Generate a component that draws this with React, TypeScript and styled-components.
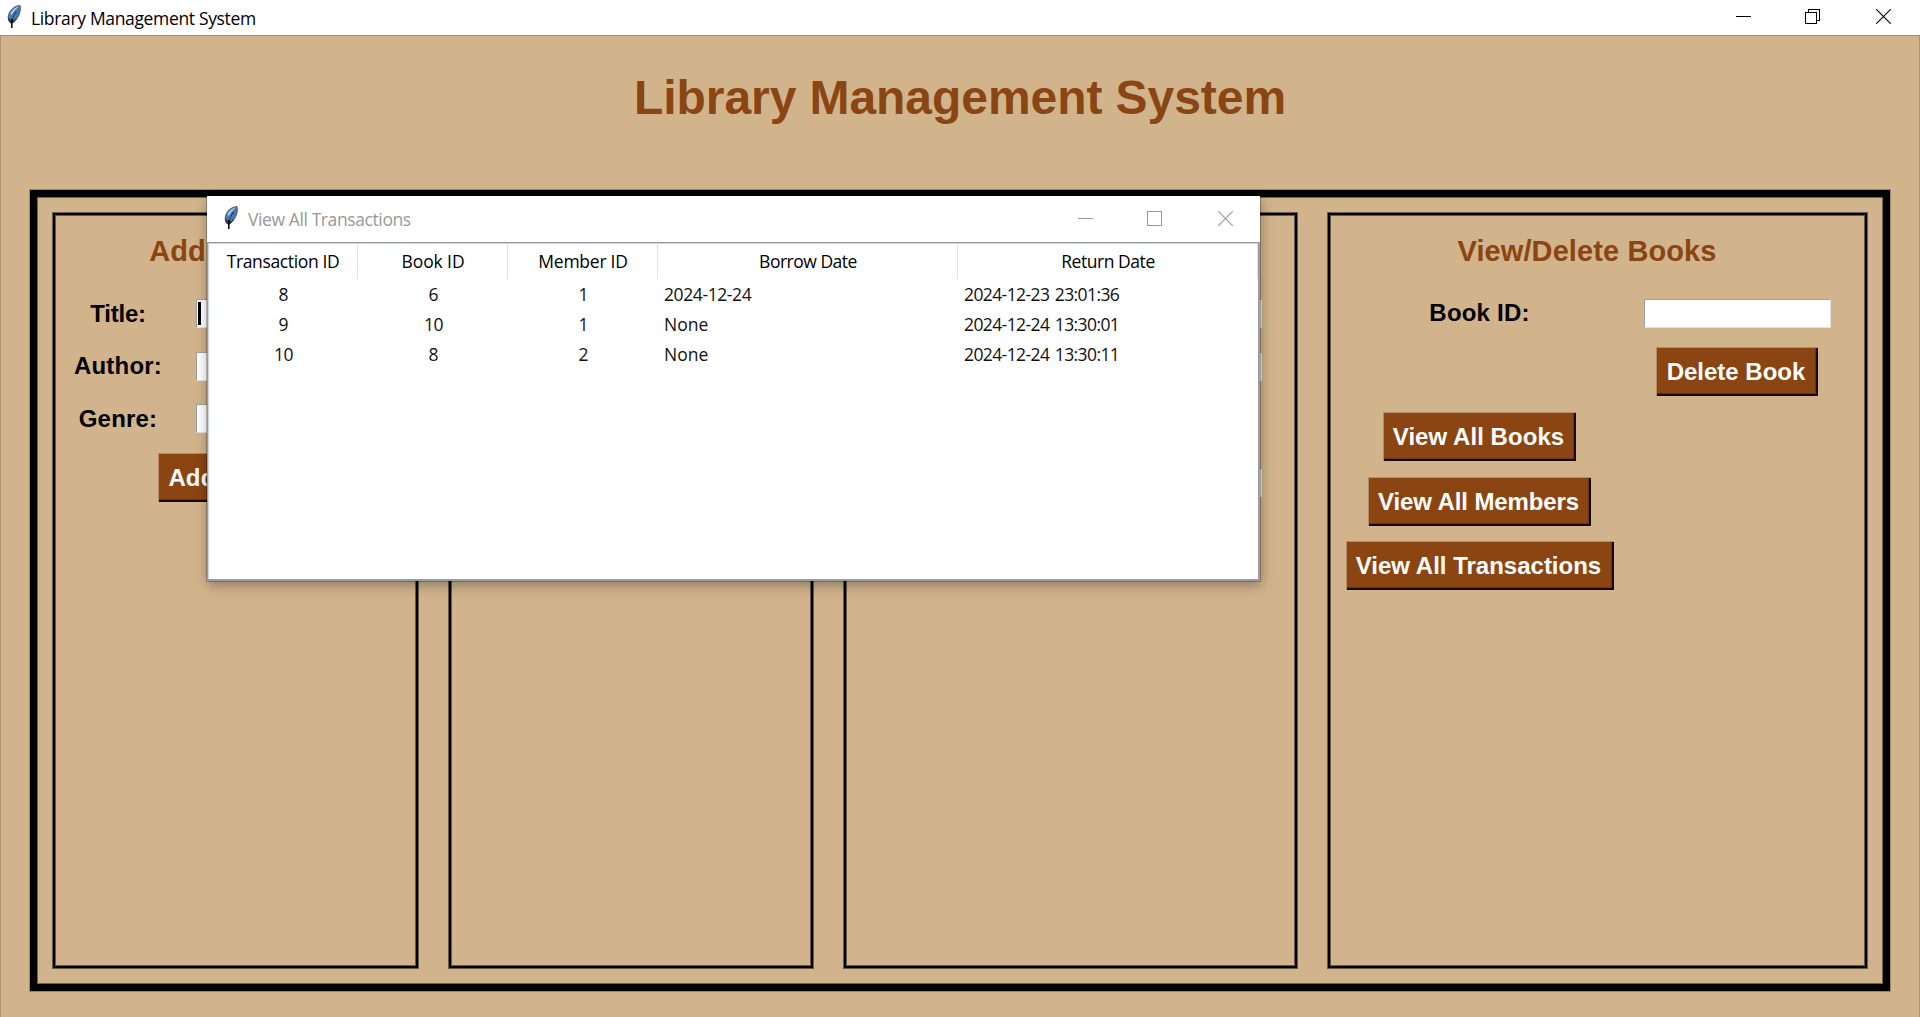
import React from 'react';
import styled, { createGlobalStyle, css } from 'styled-components';

const colors = {
  tan: '#d2b48c',
  brown: '#8b4513',
  edge: '#a99172',
  treeEdge: '#969da6',
};

const GlobalStyle = createGlobalStyle`
  *, *::before, *::after { box-sizing: border-box; }
  html, body { margin: 0; padding: 0; overflow: hidden; }
  body { font-family: "Liberation Sans", Arial, sans-serif; color: #000; }
`;

const Desktop = styled.div`
  position: relative;
  display: flex;
  flex-direction: column;
  width: 1920px;
  height: 1017px;
  background: ${colors.tan};
  overflow: hidden;
`;

const MainTitleBar = styled.header`
  display: flex;
  flex: none;
  height: 35px;
  padding-left: 7px;
  background: #fff;
`;

const WindowTitle = styled.span<{ $muted?: boolean; $track: number }>`
  font-family: "Open Sans", "Noto Sans", sans-serif;
  font-size: 17.5px;
  line-height: 24px;
  letter-spacing: ${(p) => p.$track}px;
  color: ${(p) => (p.$muted ? '#999' : '#000')};
  white-space: nowrap;
`;

const MainTitle = styled(WindowTitle)`
  margin: 6px 0 0 9px;
`;

const Controls = styled.div<{ $muted?: boolean; $gaps: string; $top: number }>`
  display: grid;
  grid-template-columns: ${(p) => p.$gaps};
  margin-left: auto;
  padding-top: ${(p) => p.$top}px;
  color: ${(p) => (p.$muted ? '#999' : '#000')};

  svg { display: block; }
`;

const Feather = styled.svg<{ $top: number }>`
  display: block;
  flex: none;
  width: 15px;
  height: 24px;
  margin-top: ${(p) => p.$top}px;
`;

const MainBody = styled.main`
  display: flex;
  flex: 1;
  flex-direction: column;
  padding: 0 29px 26px;
  border: 1px solid ${colors.edge};
  border-bottom: 0;
`;

const PageTitle = styled.h1`
  flex: none;
  height: 154px;
  margin: 0;
  padding-top: 34px;
  font-size: 48px;
  line-height: 56px;
  letter-spacing: -0.06px;
  text-align: center;
  color: ${colors.brown};
`;

const Frame = styled.section`
  display: grid;
  flex: 1;
  grid-template-columns: 365px 364px 453px 539px;
  column-gap: 31px;
  padding: 16px;
  border: 7px solid #000;
  box-shadow: 0 0 0 1px rgba(0, 0, 0, 0.25), inset 0 0 0 1px rgba(0, 0, 0, 0.45);
`;

const Panel = styled.section<{ $columns: string; $rows: string; $padX: number }>`
  display: grid;
  grid-template-columns: ${(p) => p.$columns};
  grid-template-rows: ${(p) => p.$rows};
  align-items: center;
  justify-items: center;
  align-content: start;
  padding: 8px ${(p) => p.$padX}px 0;
  border: 2px solid #000;
  box-shadow: 0 0 0 1px rgba(0, 0, 0, 0.5), inset 0 0 0 1px rgba(0, 0, 0, 0.5);
`;

const PanelTitle = styled.h2<{ $shift?: number }>`
  grid-column: 1 / -1;
  margin: 0;
  padding: 0 ${(p) => p.$shift ?? 0}px 8px 0;
  font-size: 29px;
  line-height: 34px;
  letter-spacing: 0.1px;
  color: ${colors.brown};
  white-space: nowrap;
`;

const Label = styled.label<{ $track?: number }>`
  font-size: 24px;
  font-weight: bold;
  line-height: 28px;
  letter-spacing: ${(p) => p.$track ?? 0.2}px;
  white-space: nowrap;
`;

const EmptyRow = styled.div`
  grid-column: 1 / -1;
`;

const Entry = styled.div<{ $end?: boolean }>`
  display: flex;
  grid-column: 2;
  justify-self: ${(p) => (p.$end ? 'end' : 'center')};
  width: 187px;
  height: 29px;
  padding: 2px 1px;
  background: #fff;
  border: 1px solid #e3e3e3;
  border-top-color: #a0a0a0;
  border-left-color: #a0a0a0;
`;

const Caret = styled.span`
  width: 3px;
  height: 23px;
  background: #000;
`;

const TkButton = styled.button<{ $width: number; $column?: string; $track?: number }>`
  grid-column: ${(p) => p.$column ?? '1'};
  width: ${(p) => p.$width}px;
  height: 49px;
  padding: 0 2px 0 0;
  border: 0;
  border-radius: 0;
  background: ${colors.brown};
  box-shadow: inset 1px 1px 0 #b98a68, inset -2px -2px 0 #140a03, inset -3px -3px 0 #6a340e;
  font-family: inherit;
  font-size: 24px;
  font-weight: bold;
  line-height: 49px;
  letter-spacing: ${(p) => p.$track ?? 0}px;
  color: #fff;
  white-space: nowrap;
`;

const Dialog = styled.section`
  position: absolute;
  top: 196px;
  left: 207px;
  display: flex;
  flex-direction: column;
  width: 1053px;
  height: 385px;
  background: #fff;
  box-shadow: 0 0 0 1px rgba(0, 0, 0, 0.22), 1px 4px 12px rgba(0, 0, 0, 0.34);
`;

const DialogTitleBar = styled.header`
  display: flex;
  flex: none;
  height: 46px;
  padding-left: 17px;
`;

const DialogTitle = styled(WindowTitle)`
  margin: 11px 0 0 9px;
`;

const Tree = styled.div`
  flex: 1;
  border: 1px solid ${colors.treeEdge};
  border-width: 1px 2px 2px 1px;
  box-shadow: inset 1px 1px 0 #ccd1d6;
`;

const TreeRow = styled.div<{ $header?: boolean }>`
  display: grid;
  grid-template-columns: 150px 150px 150px 300px 300px;
  height: ${(p) => (p.$header ? 36 : 30)}px;
  line-height: ${(p) => (p.$header ? 36 : 30)}px;
`;

const Cell = styled.span<{ $header?: boolean; $left?: boolean; $track: number }>`
  padding-left: ${(p) => (p.$left ? 6 : 1)}px;
  font-family: "Open Sans", "Noto Sans", sans-serif;
  font-size: 17.5px;
  letter-spacing: ${(p) => p.$track}px;
  word-spacing: ${(p) => (p.$left ? 1.5 : 0)}px;
  text-align: ${(p) => (p.$left ? 'left' : 'center')};
  color: ${(p) => (p.$header ? '#000' : '#111')};
  white-space: nowrap;
  ${(p) => p.$header && css`border-right: 1px solid #e2e2e2;`}
`;

const headings: [string, number][] = [
  ['Transaction ID', -0.37],
  ['Book ID', -0.1],
  ['Member ID', -0.25],
  ['Borrow Date', -0.5],
  ['Return Date', -0.45],
];

const transactions = [
  ['8', '6', '1', '2024-12-24', '2024-12-23 23:01:36'],
  ['9', '10', '1', 'None', '2024-12-24 13:30:01'],
  ['10', '8', '2', 'None', '2024-12-24 13:30:11'],
];

const trackOf = (text: string) => {
  if (text.length > 12) return -0.6;
  if (text.length > 4) return -0.4;
  return text.length === 2 ? -0.6 : 0;
};

const FeatherIcon = ({ top }: { top: number }) => (
  <Feather $top={top} viewBox="0 0 15 24">
    <path d="M4.5 18.5C1 16.500.4 12 2.200 8 4 4 8.500.6 13 .5c.8 3 .3 6.500-1.300 10C10.200 14 7.500 17.500 4.500 18.500z" fill="#4577b4" stroke="#5c5c5c" strokeWidth="1" />
    <path d="M12.300 1.200C8.500 2 5 5 3.500 8.500l.5 2C6 7.500 9 3.500 12.300 1.200z" fill="#b4cfeb" />
    <path d="M10.500 3.500C8 7 5.800 11 5.200 14.500l2-1C8 10.500 9.500 6.500 10.500 3.500z" fill="#5b9be0" />
    <path d="M9.500 6C7.500 9 5.800 13 4.700 17" fill="none" stroke="#16243a" strokeWidth="1" />
    <path d="M1.200 12c-.2 3 .8 5.500 3 6.500 2-.8 3.800-2.500 5.300-5L8 14l-.8 1.500-1.700-1-1.700.8z" fill="#2b3440" />
    <path d="M4.800 14v9" stroke="#000" strokeWidth="1.500" />
  </Feather>
);

const Minimize = ({ w, h }: { w: number; h: number }) => (
  <svg width={w} height={h} shapeRendering="crispEdges">
    <rect y={Math.floor(h / 2)} width={w} height="1" fill="currentColor" />
  </svg>
);

const Restore = () => (
  <svg width="15" height="15" fill="none" stroke="currentColor" shapeRendering="crispEdges">
    <rect x="0.5" y="3.5" width="11" height="11" />
    <path d="M3.500 3.500v-3h11v11h-3" />
  </svg>
);

const Maximize = () => (
  <svg width="15" height="15" fill="none" stroke="currentColor" shapeRendering="crispEdges">
    <rect x="0.5" y="0.5" width="14" height="14" />
  </svg>
);

const Close = () => (
  <svg width="15" height="15" fill="none" stroke="currentColor" strokeWidth="1.100">
    <path d="M0.200 0.200L14.800 14.800M14.800 0.200L0.200 14.800" />
  </svg>
);

const TransactionsDialog = () => (
  <Dialog>
    <DialogTitleBar>
      <FeatherIcon top={10} />
      <DialogTitle $muted $track={-0.4}>View All Transactions</DialogTitle>
      <Controls $muted $gaps="69px 71px 42px" $top={15}>
        <Minimize w={15} h={15} />
        <Maximize />
        <Close />
      </Controls>
    </DialogTitleBar>
    <Tree>
      <TreeRow $header>
        {headings.map(([text, track]) => (
          <Cell key={text} $header $track={track}>{text}</Cell>
        ))}
      </TreeRow>
      {transactions.map((row) => (
        <TreeRow key={row[0]}>
          {row.map((text, i) => (
            <Cell key={i} $left={i > 2} $track={trackOf(text)}>{text}</Cell>
          ))}
        </TreeRow>
      ))}
    </Tree>
  </Dialog>
);

export default function App() {
  return (
    <>
      <GlobalStyle />
      <Desktop>
        <MainTitleBar>
          <FeatherIcon top={5} />
          <MainTitle $track={-0.34}>Library Management System</MainTitle>
          <Controls $gaps="69px 71px 44px" $top={9}>
            <Minimize w={15} h={15} />
            <Restore />
            <Close />
          </Controls>
        </MainTitleBar>
        <MainBody>
          <PageTitle>Library Management System</PageTitle>
          <Frame>
            <Panel $columns="126px 217px" $rows="64px 53px 52px 53px 64px" $padX={0}>
              <PanelTitle $shift={17}>Add Book</PanelTitle>
              <Label $track={-0.2}>Title:</Label>
              <Entry><Caret /></Entry>
              <Label>Author:</Label>
              <Entry />
              <Label>Genre:</Label>
              <Entry />
              <TkButton $width={137} $column="1 / -1" $track={0.1}>Add Book</TkButton>
            </Panel>
            <Panel $columns="1fr" $rows="64px" $padX={10} />
            <Panel $columns="1fr 1fr" $rows="64px 53px 52px 64px 53px" $padX={33}>
              <PanelTitle />
              <Entry $end />
              <Entry $end />
              <EmptyRow />
              <Entry $end />
            </Panel>
            <Panel $columns="299px 216px" $rows="64px 52px 65px 65px 64px 65px" $padX={0}>
              <PanelTitle $shift={1}>View/Delete Books</PanelTitle>
              <Label>Book ID:</Label>
              <Entry />
              <TkButton $width={162} $column="2">Delete Book</TkButton>
              <TkButton $width={193} $track={0.05}>View All Books</TkButton>
              <TkButton $width={223} $track={-0.1}>View All Members</TkButton>
              <TkButton $width={268}>View All Transactions</TkButton>
            </Panel>
          </Frame>
        </MainBody>
      </Desktop>
      <TransactionsDialog />
    </>
  );
}
